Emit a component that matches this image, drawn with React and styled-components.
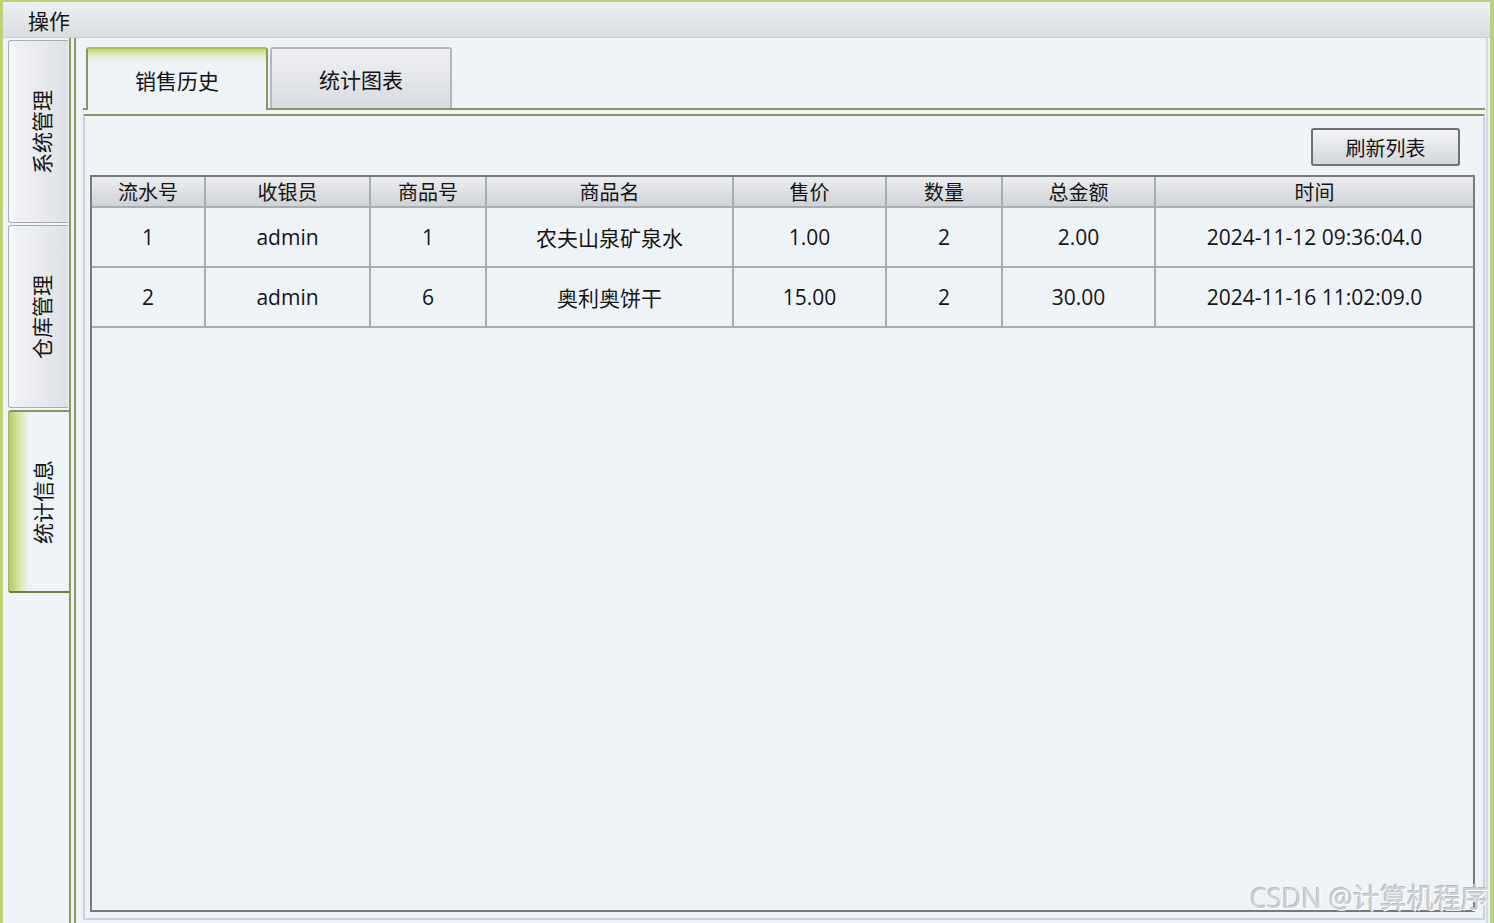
import React from "react";
import styled, { createGlobalStyle, css } from "styled-components";

const GlobalStyle = createGlobalStyle`
  html, body {
    margin: 0;
    padding: 0;
    background: #eef3f8;
  }
  * {
    box-sizing: border-box;
  }
`;

const FONT = `"Open Sans", "Noto Sans CJK SC", sans-serif`;
const OLIVE = "#8a9860";
const GREEN = "#bcd27a";

const Window = styled.div`
  position: relative;
  width: 1494px;
  height: 923px;
  overflow: hidden;
  display: flex;
  flex-direction: column;
  background: #eef3f8;
  border-top: 2px solid ${GREEN};
  border-left: 3px solid ${GREEN};
  border-right: 4px solid ${GREEN};
  font-family: ${FONT};
  color: #141414;
`;

const MenuBar = styled.div`
  height: 36px;
  flex-shrink: 0;
  display: flex;
  align-items: center;
  padding-left: 25px;
  background: linear-gradient(#eef0f3, #d9dce1);
  border-bottom: 1px solid #c9ced6;
  font-size: 21px;
`;

const Body = styled.div`
  flex: 1;
  display: flex;
  min-height: 0;
`;

const SideStrip = styled.div`
  width: 66px;
  flex-shrink: 0;
  display: flex;
  flex-direction: column;
  gap: 2px;
  padding: 2px 0 0 5px;
`;

const SideTab = styled.div`
  height: 183px;
  width: ${(p) => (p.active ? "62px" : "60px")};
  display: flex;
  align-items: center;
  justify-content: center;
  border: 1px solid #a8acb2;
  border-right: none;
  border-radius: 3px 0 0 3px;
  background: linear-gradient(90deg, #f4f5f7, #dde0e5);
  ${(p) =>
    p.active &&
    css`
      border: none;
      border-top: 2px solid ${OLIVE};
      border-bottom: 2px solid #6f7c45;
      border-left: 1px solid #9fb55a;
      background: linear-gradient(90deg, #b3cb62 0px, #d7e4aa 10px, #eef3f8 20px, #eef3f8 100%);
    `}
`;

const SideLabel = styled.span`
  writing-mode: vertical-rl;
  text-orientation: sideways;
  transform: rotate(180deg);
  font-size: 21px;
  margin-left: 4px;
`;

const OuterPane = styled.div`
  flex: 1;
  display: flex;
  flex-direction: column;
  border-left: 7px double ${OLIVE};
  border-right: 2px solid #d2d9e2;
  margin-right: 2px;
  padding: 9px 1px 3px 7px;
`;

const TabRow = styled.div`
  display: flex;
  align-items: flex-end;
  gap: 2px;
  padding-left: 3px;
  border-bottom: 2px solid ${OLIVE};
`;

const Tab = styled.div`
  width: 182px;
  height: 61px;
  display: flex;
  align-items: center;
  justify-content: center;
  font-size: 21px;
  border: 2px solid #b3b6bb;
  border-bottom: none;
  border-radius: 3px 3px 0 0;
  background: linear-gradient(#eff0f3, #d8dbe0);
  ${(p) =>
    p.active &&
    css`
      height: 63px;
      margin-bottom: -2px;
      position: relative;
      z-index: 1;
      border-color: ${OLIVE};
      border-top: 2px solid #a8c04e;
      background: linear-gradient(#c2d77c 0px, #e2ebc4 6px, #eef3f8 14px, #eef3f8 100%);
    `}
`;

const Panel = styled.div`
  flex: 1;
  display: flex;
  flex-direction: column;
  margin-top: 4px;
  border: 2px solid #c9d3df;
  border-top: 2px solid ${OLIVE};
  padding: 12px 8px 6px 5px;
  min-height: 0;
`;

const Toolbar = styled.div`
  display: flex;
  justify-content: flex-end;
  padding-right: 15px;
`;

const Button = styled.button`
  width: 149px;
  height: 38px;
  font-family: ${FONT};
  font-size: 20px;
  color: #141414;
  border: 2px solid #6d7075;
  border-radius: 3px;
  background: linear-gradient(#f3f4f6, #d3d6db);
  cursor: pointer;
  padding: 0;
`;

const Table = styled.div`
  flex: 1;
  margin-top: 9px;
  display: flex;
  flex-direction: column;
  border: 2px solid #76797e;
  min-height: 0;
`;

const COLS = "114px 165px 116px 247px 153px 116px 153px 1fr";

const HeadRow = styled.div`
  display: grid;
  grid-template-columns: ${COLS};
  height: 31px;
  background: linear-gradient(#ecedf0, #cfd2d7);
  border-bottom: 2px solid #a9acb1;
`;

const Row = styled.div`
  display: grid;
  grid-template-columns: ${COLS};
  height: 60px;
  border-bottom: 2px solid #a9acb1;
`;

const Cell = styled.div`
  display: flex;
  align-items: center;
  justify-content: center;
  font-size: ${(p) => (p.head ? "20px" : "21px")};
  border-right: 2px solid #a9acb1;
  white-space: nowrap;
  &:last-child {
    border-right: none;
  }
`;

const Watermark = styled.div`
  position: absolute;
  right: 2px;
  bottom: 7px;
  font-family: ${FONT};
  font-size: 27px;
  color: #cdd1d8;
  text-shadow: 1px 1px 0 #ffffff, -1px -1px 0 #b6bbc3;
  pointer-events: none;
`;

const headers = ["流水号", "收银员", "商品号", "商品名", "售价", "数量", "总金额", "时间"];

const rows = [
  ["1", "admin", "1", "农夫山泉矿泉水", "1.00", "2", "2.00", "2024-11-12 09:36:04.0"],
  ["2", "admin", "6", "奥利奥饼干", "15.00", "2", "30.00", "2024-11-16 11:02:09.0"],
];

const sideTabs = ["系统管理", "仓库管理", "统计信息"];

export default function App() {
  return (
    <>
      <GlobalStyle />
      <Window>
        <MenuBar>操作</MenuBar>
        <Body>
          <SideStrip>
            {sideTabs.map((t, i) => (
              <SideTab key={t} active={i === 2}>
                <SideLabel>{t}</SideLabel>
              </SideTab>
            ))}
          </SideStrip>
          <OuterPane>
            <TabRow>
              <Tab active>销售历史</Tab>
              <Tab>统计图表</Tab>
            </TabRow>
            <Panel>
              <Toolbar>
                <Button>刷新列表</Button>
              </Toolbar>
              <Table>
                <HeadRow>
                  {headers.map((h) => (
                    <Cell head key={h}>
                      {h}
                    </Cell>
                  ))}
                </HeadRow>
                {rows.map((r) => (
                  <Row key={r[0]}>
                    {r.map((v, i) => (
                      <Cell key={i}>{v}</Cell>
                    ))}
                  </Row>
                ))}
              </Table>
            </Panel>
          </OuterPane>
        </Body>
        <Watermark>CSDN @计算机程序</Watermark>
      </Window>
    </>
  );
}
